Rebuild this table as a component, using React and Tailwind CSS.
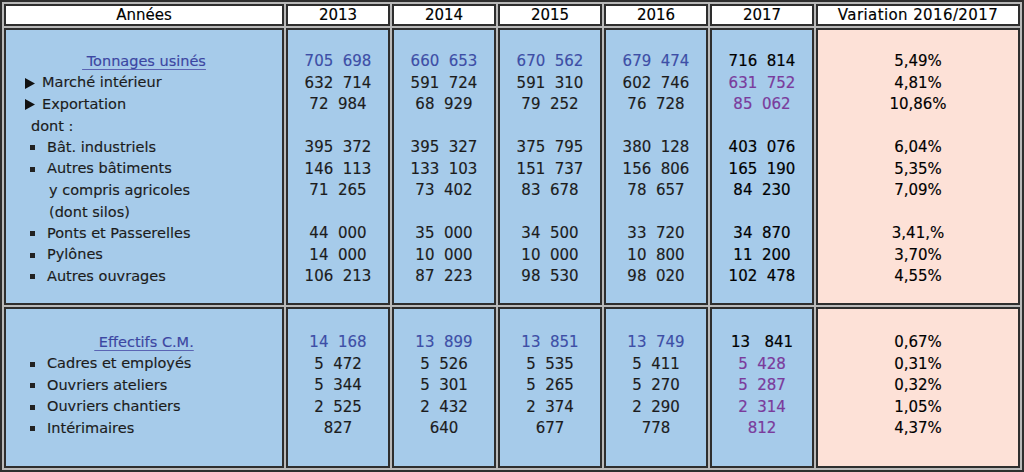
import React from "react";

const section1 = {
  labels: [
    { type: "title", text: "Tonnages usinés" },
    { type: "arrow", text: "Marché intérieur" },
    { type: "arrow", text: "Exportation" },
    { type: "plain", text: "dont :" },
    { type: "bullet", text: "Bât. industriels" },
    { type: "bullet", text: "Autres bâtiments" },
    { type: "indent", text: "y compris agricoles" },
    { type: "indent", text: "(dont silos)" },
    { type: "bullet", text: "Ponts et Passerelles" },
    { type: "bullet", text: "Pylônes" },
    { type: "bullet", text: "Autres ouvrages" },
  ],
  years: [
    ["705  698", "632  714", "72  984", "", "395  372", "146  113", "71  265", "", "44  000", "14  000", "106  213"],
    ["660  653", "591  724", "68  929", "", "395  327", "133  103", "73  402", "", "35  000", "10  000", "87  223"],
    ["670  562", "591  310", "79  252", "", "375  795", "151  737", "83  678", "", "34  500", "10  000", "98  530"],
    ["679  474", "602  746", "76  728", "", "380  128", "156  806", "78  657", "", "33  720", "10  800", "98  020"],
  ],
  last: ["716  814", "631  752", "85  062", "", "403  076", "165  190", "84  230", "", "34  870", "11  200", "102  478"],
  lastPurple: [1, 2],
  variation: ["5,49%", "4,81%", "10,86%", "", "6,04%", "5,35%", "7,09%", "", "3,41,%", "3,70%", "4,55%"],
  pad: "pt-[21px]",
};

const section2 = {
  labels: [
    { type: "title", text: "Effectifs C.M." },
    { type: "bullet", text: "Cadres et employés" },
    { type: "bullet", text: "Ouvriers ateliers" },
    { type: "bullet", text: "Ouvriers chantiers" },
    { type: "bullet", text: "Intérimaires" },
  ],
  years: [
    ["14  168", "5  472", "5  344", "2  525", "827"],
    ["13  899", "5  526", "5  301", "2  432", "640"],
    ["13  851", "5  535", "5  265", "2  374", "677"],
    ["13  749", "5  411", "5  270", "2  290", "778"],
  ],
  last: ["13   841", "5  428", "5  287", "2  314", "812"],
  lastPurple: [1, 2, 3, 4],
  variation: ["0,67%", "0,31%", "0,32%", "1,05%", "4,37%"],
  pad: "pt-[23px]",
};

const headers = ["2013", "2014", "2015", "2016", "2017"];

const Cell = ({ className = "", children }) => (
  <div className={`border-2 border-[#2e2e2e] ${className}`}>{children}</div>
);

const Label = ({ item }) => {
  if (item.type === "title") {
    return (
      <div className="h-[21.5px] leading-[21.5px] text-center text-[#3c46a2]">
        <span className="underline decoration-1 underline-offset-[3px] decoration-[#5a64b4]">
          {"\u00a0" + item.text}
        </span>
      </div>
    );
  }
  if (item.type === "arrow") {
    return (
      <div className="h-[21.5px] flex items-center pl-[19px]">
        <svg width="10" height="11" viewBox="0 0 10 11" className="shrink-0">
          <path d="M0 0 L10 5.5 L0 11 Z" fill="#111" />
        </svg>
        <span className="ml-[7px]">{item.text}</span>
      </div>
    );
  }
  if (item.type === "bullet") {
    return (
      <div className="h-[21.5px] flex items-center pl-[24px]">
        <span className="w-[5px] h-[5px] bg-[#222] shrink-0" />
        <span className="ml-[12px]">{item.text}</span>
      </div>
    );
  }
  if (item.type === "indent") {
    return <div className="h-[21.5px] leading-[21.5px] pl-[43px]">{item.text}</div>;
  }
  return <div className="h-[21.5px] leading-[21.5px] pl-[25px]">{item.text}</div>;
};

const NumLine = ({ value, color }) => (
  <div className={`h-[21.5px] leading-[21.5px] text-center whitespace-pre text-[15px] ${color}`}>
    {value}
  </div>
);

const Section = ({ data }) => (
  <>
    <Cell className={`bg-[#a6cbea] text-[14.5px] text-[#1c1c1c] ${data.pad}`}>
      {data.labels.map((item, i) => (
        <Label key={i} item={item} />
      ))}
    </Cell>
    {data.years.map((col, c) => (
      <Cell key={c} className={`bg-[#a6cbea] ${data.pad}`}>
        {col.map((v, i) => (
          <NumLine key={i} value={v} color={i === 0 ? "text-[#3d4ea6]" : "text-[#1c1c1c]"} />
        ))}
      </Cell>
    ))}
    <Cell className={`bg-[#a6cbea] ${data.pad} [-webkit-text-stroke:0.2px]`}>
      {data.last.map((v, i) => (
        <NumLine key={i} value={v} color={data.lastPurple.includes(i) ? "text-[#7a3b9c]" : "text-black"} />
      ))}
    </Cell>
    <Cell className={`bg-[#fde1d7] ${data.pad}`}>
      {data.variation.map((v, i) => (
        <NumLine key={i} value={v} color="text-black" />
      ))}
    </Cell>
  </>
);

export default function App() {
  return (
    <div className="w-[1024px] h-[472px] bg-white font-['DejaVu_Sans',sans-serif] [-webkit-text-stroke:0.15px]">
      <div className="w-full h-full border-2 border-[#2e2e2e] bg-[#b9b9b9] p-[2px]">
        <div className="grid h-full gap-[2px] grid-cols-[280px_104px_104px_104px_104px_104px_1fr] grid-rows-[22px_277px_1fr]">
          <Cell className="bg-white flex items-center justify-center text-[15px] text-black">
            Années
          </Cell>
          {headers.map((h) => (
            <Cell key={h} className="bg-white flex items-center justify-center text-[15px] text-black">
              {h}
            </Cell>
          ))}
          <Cell className="bg-white flex items-center justify-center text-[15px] tracking-[0.4px] text-black">
            Variation 2016/2017
          </Cell>
          <Section data={section1} />
          <Section data={section2} />
        </div>
      </div>
    </div>
  );
}
